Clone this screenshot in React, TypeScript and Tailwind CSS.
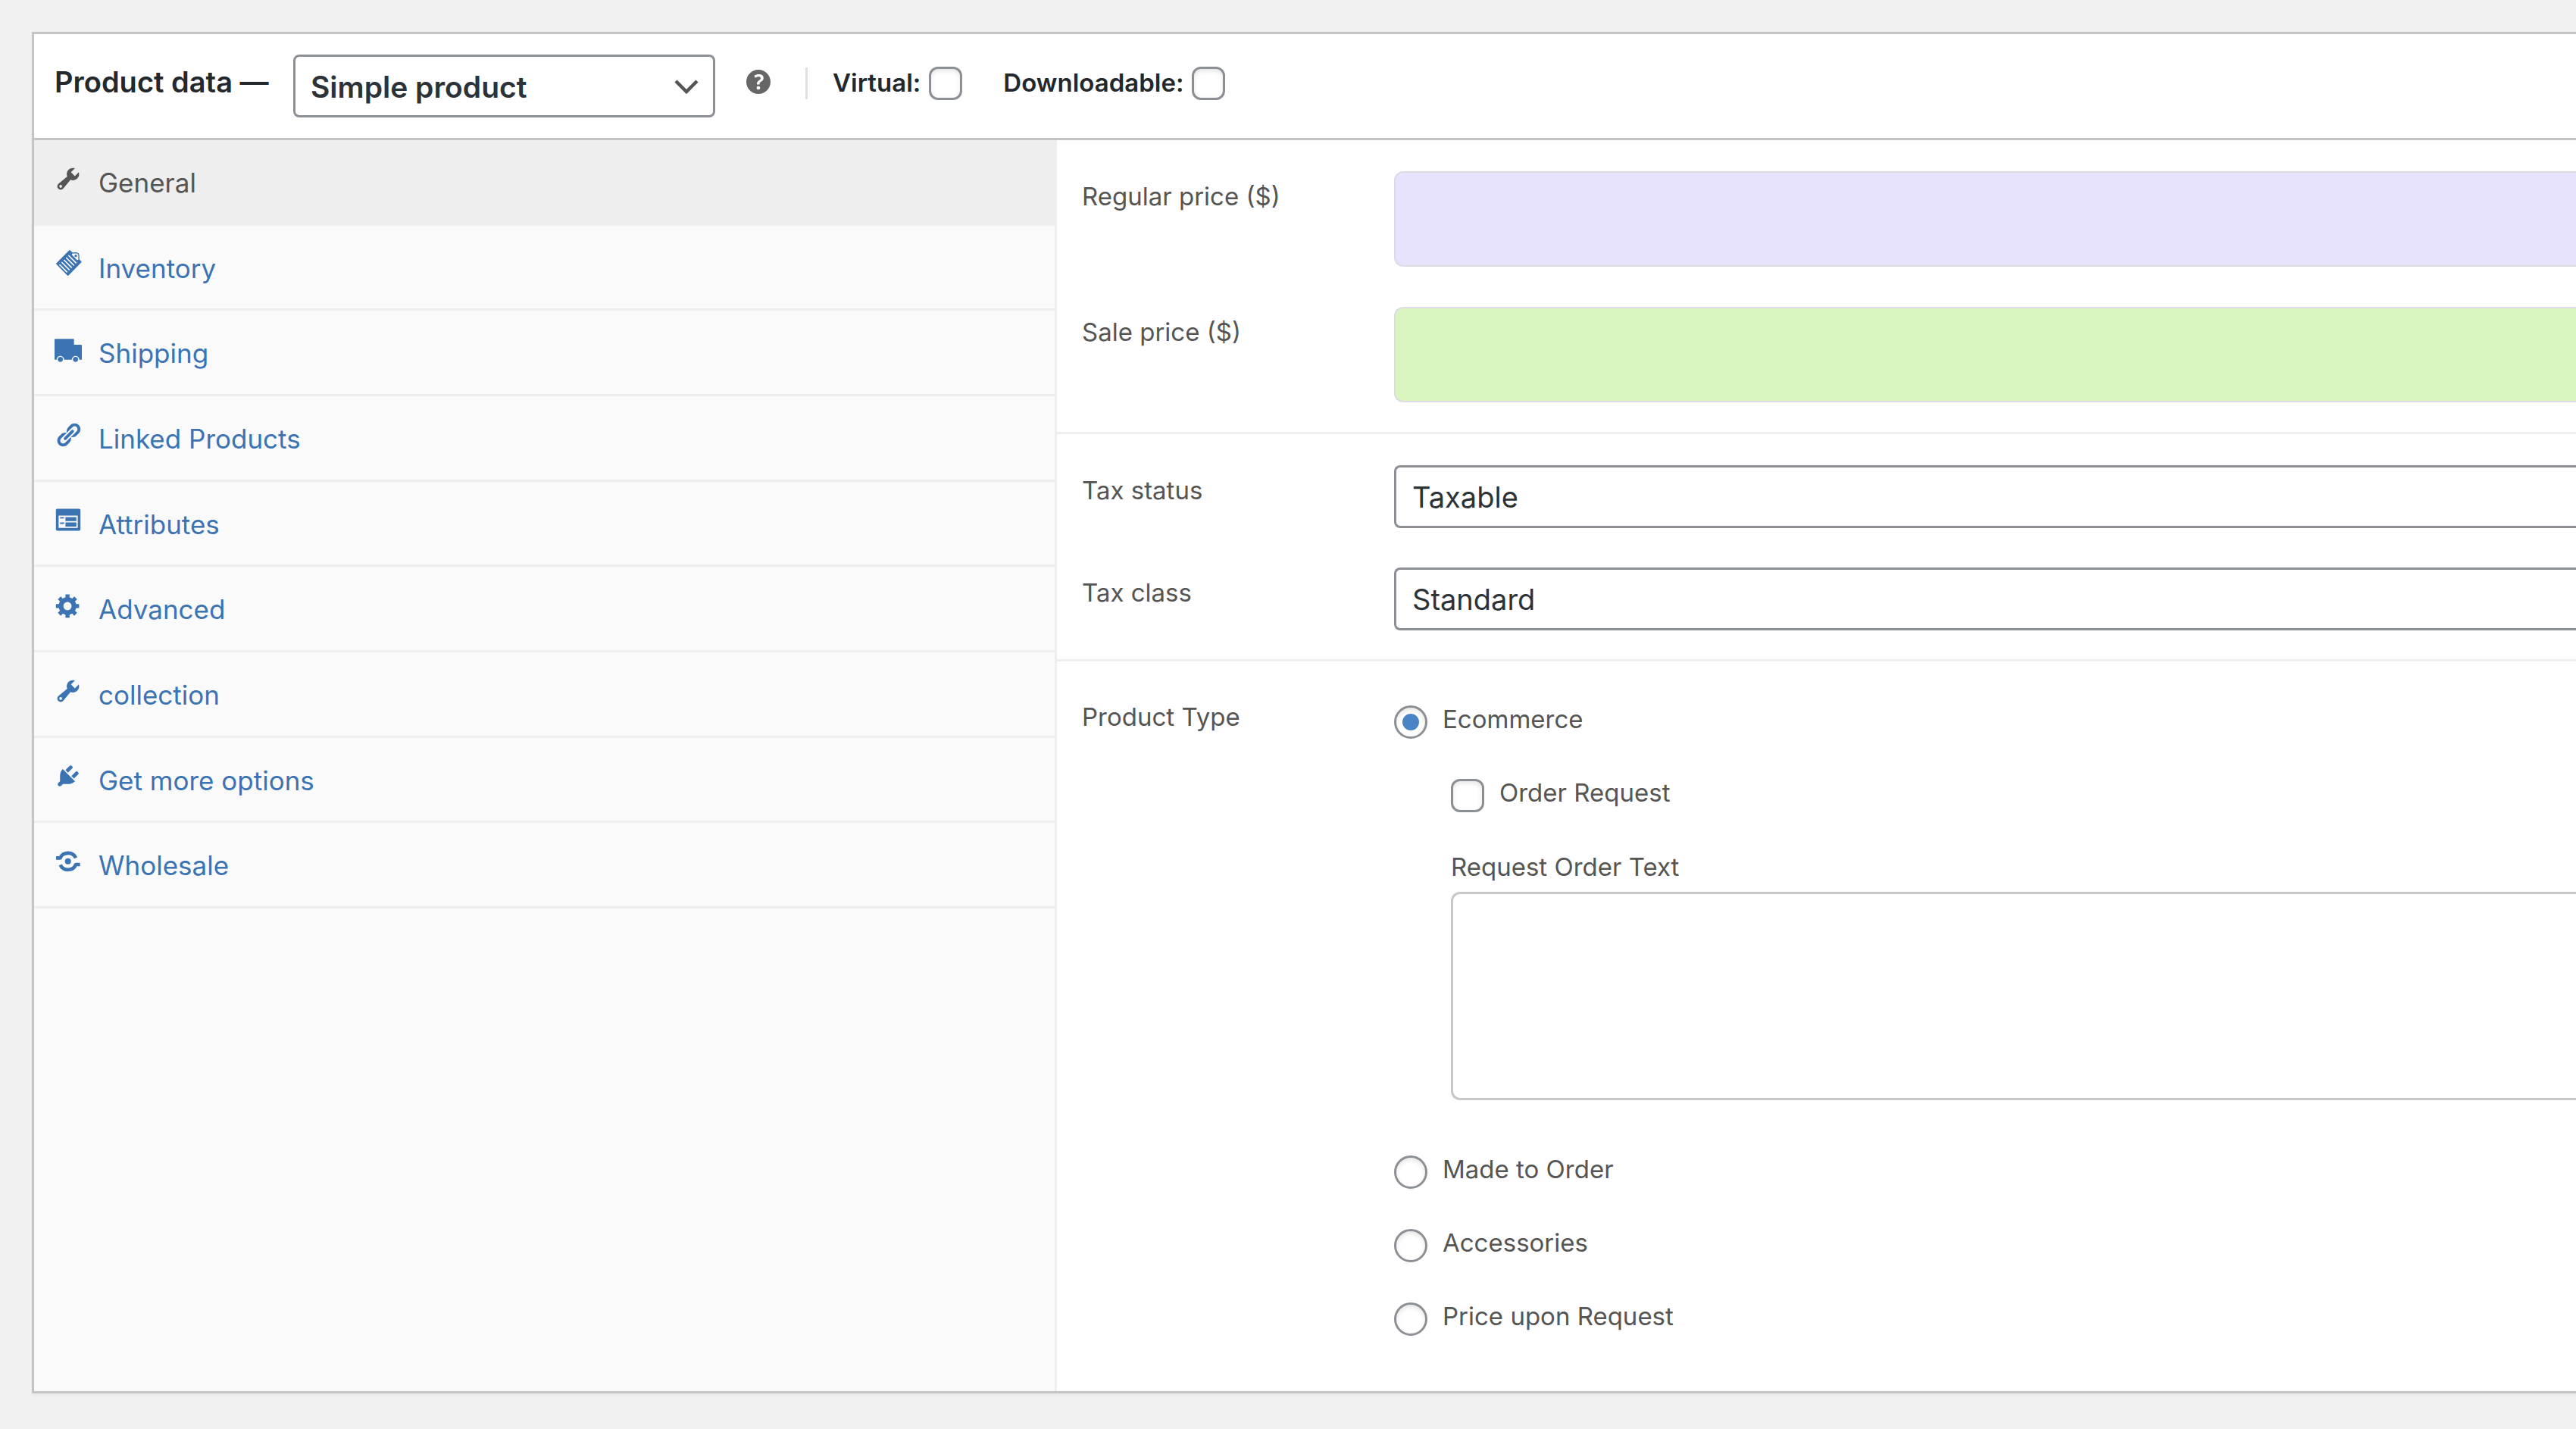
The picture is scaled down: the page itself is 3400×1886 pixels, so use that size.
import { useState, type ReactNode } from "react";

const wrench = (
  <svg viewBox="0 0 20 20" className="size-9" fill="currentColor" aria-hidden="true">
    <path d="M16.68 9.77c-1.34 1.34-3.3 1.67-4.95.99l-5.41 6.52c-.99.99-2.59.99-3.58 0s-.99-2.59 0-3.57l6.52-5.42c-.68-1.65-.35-3.61.99-4.95 1.28-1.28 3.12-1.62 4.72-1.06l-2.89 2.89 2.82 2.82 2.86-2.87c.53 1.58.18 3.39-1.08 4.65zM3.81 16.21c.4.39 1.04.39 1.43 0 .4-.4.4-1.04 0-1.43-.39-.4-1.03-.4-1.43 0-.39.39-.39 1.03 0 1.43z" />
  </svg>
);

const ticket = (
  <svg viewBox="96 391 108 108" className="size-9" fill="none" aria-hidden="true">
    <path
      d="M156 395 L106 445 L149 489 L199 438 Z"
      fill="currentColor"
      stroke="currentColor"
      strokeWidth="7"
      strokeLinejoin="round"
    />
    <path
      d="M163 403 L182 402 Q192 403 192 413 L192 431 L184 433 L163 411 Z"
      fill="#fafafa"
      stroke="currentColor"
      strokeWidth="4"
      strokeLinejoin="round"
    />
    <circle cx="180" cy="414" r="5" fill="currentColor" />
    <path
      d="M115 448 L146 479 M124 439 L155 470 M133 430 L164 461 M142 421 L173 452 M151 412 L182 443"
      stroke="#fafafa"
      strokeWidth="5"
    />
  </svg>
);

const truck = (
  <svg viewBox="96 729 108 108" className="size-9" fill="currentColor" aria-hidden="true">
    <path d="M98 742 H171 Q173 742 173 744 V765 H201 Q204 765 204 768 V824 H194 A15 15 0 0 0 164 824 H134 A15 15 0 0 0 104 824 H96 V744 Q96 742 98 742 Z" />
    <circle cx="119" cy="823" r="10" />
    <circle cx="179" cy="823" r="10" />
  </svg>
);

const chain = (
  <svg viewBox="0 0 20 20" className="size-9" fill="currentColor" aria-hidden="true">
    <path d="M17.74 2.76c1.68 1.69 1.68 4.41 0 6.1l-1.53 1.52c-1.12 1.12-2.7 1.47-4.14 1.09l2.62-2.61.76-.77.76-.76c.84-.84.84-2.2 0-3.04-.84-.85-2.2-.85-3.04 0l-.77.76-3.38 3.38c-.37-1.44-.02-3.02 1.1-4.14l1.52-1.53c1.69-1.68 4.42-1.68 6.1 0zM8.59 13.43l5.34-5.34c.42-.42.42-1.1 0-1.52-.44-.43-1.13-.39-1.53 0l-5.33 5.34c-.42.42-.42 1.1 0 1.52.44.43 1.13.39 1.52 0zm-.76 2.29l4.14-4.15c.38 1.44.03 3.02-1.09 4.14l-1.52 1.53c-1.69 1.68-4.41 1.68-6.1 0-1.68-1.68-1.68-4.42 0-6.1l1.53-1.52c1.12-1.12 2.7-1.47 4.14-1.1l-4.14 4.15c-.85.84-.85 2.2 0 3.05.84.84 2.2.84 3.04 0z" />
  </svg>
);

const form = (
  <svg viewBox="0 0 20 20" className="size-9" fill="currentColor" aria-hidden="true">
    <path d="M2 2h16c.55 0 1 .45 1 1v14c0 .55-.45 1-1 1H2c-.55 0-1-.45-1-1V3c0-.55.45-1 1-1zm15 14V7H3v9h14zM4 8v1h3V8H4zm4 0v3h8V8H8zm-4 4v1h3v-1H4zm4 0v3h8v-3H8z" />
  </svg>
);

const gear = (
  <svg viewBox="0 0 20 20" className="size-9" fill="currentColor" aria-hidden="true">
    <path d="M18 12h-2.18c-.17.7-.44 1.35-.81 1.93l1.54 1.54-2.1 2.1-1.54-1.54c-.58.36-1.23.63-1.91.79V19H8v-2.18c-.68-.16-1.33-.43-1.91-.79l-1.54 1.54-2.12-2.12 1.54-1.54c-.36-.58-.63-1.23-.79-1.91H1V9.03h2.17c.16-.7.44-1.35.8-1.94L2.43 5.55l2.1-2.1 1.54 1.54c.58-.37 1.24-.64 1.93-.81V2h3v2.18c.68.16 1.33.43 1.91.79l1.54-1.54 2.12 2.12-1.54 1.54c.36.59.64 1.24.8 1.94H18V12zm-8.5 1.5c1.66 0 3-1.34 3-3s-1.34-3-3-3-3 1.34-3 3 1.34 3 3 3z" />
  </svg>
);

const plug = (
  <svg viewBox="0 0 20 20" className="size-9" fill="currentColor" aria-hidden="true">
    <path d="M13.11 4.36L9.87 7.6 8 5.73l3.24-3.24c.35-.34 1.05-.2 1.56.32.52.51.66 1.21.31 1.55zm-8 1.77l.91-1.12 9.01 9.01-1.19.84c-.71.71-2.63 1.16-3.82 1.16H6.14L4.9 17.26c-.59.59-1.54.59-2.12 0-.59-.58-.59-1.53 0-2.12l1.24-1.24v-3.88c0-1.13.4-3.19 1.09-3.89zm7.26 3.97l3.24-3.24c.34-.35 1.04-.21 1.55.31.52.51.66 1.21.31 1.55l-3.24 3.25z" />
  </svg>
);

const exchange = (
  <svg viewBox="96 778 108 108" className="size-9" fill="none" stroke="currentColor" aria-hidden="true">
    <path d="M102 818 H119 C127 794 168 790 180 818" strokeWidth="14" strokeLinejoin="round" />
    <path d="M197 844 H180 C172 869 131 873 119 845" strokeWidth="14" strokeLinejoin="round" />
    <circle cx="149" cy="831" r="12" fill="currentColor" stroke="none" />
  </svg>
);

const tabs: { name: string; icon: ReactNode }[] = [
  { name: "General", icon: wrench },
  { name: "Inventory", icon: ticket },
  { name: "Shipping", icon: truck },
  { name: "Linked Products", icon: chain },
  { name: "Attributes", icon: form },
  { name: "Advanced", icon: gear },
  { name: "collection", icon: wrench },
  { name: "Get more options", icon: plug },
  { name: "Wholesale", icon: exchange },
];

const boxShape =
  "size-11 shrink-0 appearance-none rounded-xl border-3 border-[#8c8f94] bg-white shadow-[inset_0_3px_6px_rgba(0,0,0,0.1)] checked:bg-[#3582c4]";
const radioShape =
  "grid size-11 shrink-0 appearance-none place-content-center rounded-full border-3 border-[#8c8f94] bg-white shadow-[inset_0_3px_6px_rgba(0,0,0,0.1)] before:size-[22px] before:rounded-full before:content-[''] checked:before:bg-[#4a84c6]";

function HeaderCheck({ id, label }: { id: string; label: string }) {
  return (
    <label htmlFor={id} className="flex items-center gap-[11px] text-[33px] font-semibold whitespace-nowrap text-[#23282d]">
      {label}
      <input id={id} type="checkbox" className={boxShape} />
    </label>
  );
}

function Field({ id, label, children }: { id: string; label: string; children: ReactNode }) {
  return (
    <div className="flex items-start">
      <label htmlFor={id} className="w-[412px] shrink-0 pt-[9px] text-[33px] leading-12">
        {label}
      </label>
      {children}
    </div>
  );
}

function SelectField({ id, label, options }: { id: string; label: string; options: string[] }) {
  return (
    <Field id={id} label={label}>
      <select
        id={id}
        className="h-[83px] min-w-0 flex-1 appearance-none rounded-l-lg border-3 border-r-0 border-[#8c8f94] bg-white pt-px pl-[21px] text-[38px] text-[#2c3338]"
      >
        {options.map((o) => (
          <option key={o}>{o}</option>
        ))}
      </select>
    </Field>
  );
}

function Radio({ label, value, onPick }: { label: string; value: string; onPick: (v: string) => void }) {
  return (
    <label className="flex h-11 items-center gap-5">
      <input
        type="radio"
        name="product-type"
        className={radioShape}
        checked={value === label}
        onChange={() => onPick(label)}
      />
      <span className="pb-2 leading-9">{label}</span>
    </label>
  );
}

export default function App() {
  const [kind, setKind] = useState("Ecommerce");
  return (
    <div className="min-h-screen overflow-hidden bg-[#f1f1f1] pt-[42px] pb-[46px] pl-[42px] font-['Inter',sans-serif] text-[#555]">
      <section className="border-3 border-r-0 border-[#c4c4c4] bg-white shadow-[0_3px_3px_rgba(0,0,0,0.04)]">
        <header className="flex h-[140px] items-center border-b-3 border-[#c4c4c4] pl-[27px]">
          <label htmlFor="kind" className="w-[315px] shrink-0 pb-[11px] text-[38px] font-semibold whitespace-nowrap text-[#23282d]">
            Product data —
          </label>
          <div className="relative w-[557px] shrink-0">
            <select
              id="kind"
              className="h-[83px] w-full appearance-none rounded-lg border-3 border-[#8c8f94] bg-white pt-[3px] pl-5 text-[39px] font-semibold text-[#2c3338]"
            >
              <option>Simple product</option>
              <option>Grouped product</option>
            </select>
            <svg
              viewBox="0 0 32 20"
              className="pointer-events-none absolute top-8 right-[22px] h-5 w-8"
              fill="none"
              stroke="#555"
              strokeWidth="4.5"
              aria-hidden="true"
            >
              <path d="M2 3 L16 17 L30 3" />
            </svg>
          </div>
          <div className="flex items-center pb-2">
            <button type="button" aria-label="Help" className="ml-[41px] text-[#666]">
              <svg viewBox="3 3 14 14" className="mb-1 size-8" fill="currentColor" aria-hidden="true">
                <path d="M17 10c0-3.87-3.14-7-7-7-3.87 0-7 3.13-7 7s3.13 7 7 7c3.86 0 7-3.13 7-7zm-6.3 1.48H9.14v-.43c0-.38.08-.7.24-.98s.46-.57.88-.89c.41-.29.68-.53.81-.71.14-.18.2-.39.2-.62 0-.25-.09-.44-.28-.58-.19-.13-.45-.19-.79-.19-.58 0-1.25.19-2 .57l-.64-1.28c.87-.49 1.8-.74 2.77-.74.81 0 1.45.2 1.92.58.48.39.71.91.71 1.55 0 .43-.09.8-.29 1.11-.19.32-.57.67-1.11 1.06-.38.28-.61.49-.71.63-.1.15-.15.34-.15.57v.35zm-1.47 2.74c-.18-.17-.27-.42-.27-.73 0-.33.08-.58.26-.75s.43-.25.77-.25c.32 0 .57.09.75.26s.27.42.27.74c0 .3-.09.55-.27.72-.18.18-.43.27-.75.27-.33 0-.58-.09-.76-.26z" />
              </svg>
            </button>
            <div className="mr-[33px] ml-[46px] h-[42px] w-[3px] bg-[#e0e0e0]" />
            <div className="flex gap-[54px]">
              <HeaderCheck id="virtual" label="Virtual:" />
              <HeaderCheck id="downloadable" label="Downloadable:" />
            </div>
          </div>
        </header>

        <div className="flex">
          <nav className="w-[1350px] shrink-0 border-r-3 border-[#eee] bg-[#fafafa]">
            <ul className="grid h-[1014px] auto-rows-fr">
              {tabs.map((t, i) => (
                <li key={t.name} className="border-b-3 border-[#eee]">
                  <a
                    href="#"
                    className={
                      i === 0
                        ? "flex h-full items-center gap-[22px] bg-[#eee] pl-[27px] text-[35px] text-[#555]"
                        : "flex h-full items-center gap-[22px] pl-[27px] text-[35px] text-[#3b73b3]"
                    }
                  >
                    <span className="pb-2">{t.icon}</span>
                    <span className="pt-[3px]">{t.name}</span>
                  </a>
                </li>
              ))}
            </ul>
          </nav>

          <form className="min-w-0 flex-1 text-[33px]">
            <div className="flex flex-col gap-[53px] border-b-3 border-[#eee] pt-[41px] pb-[39px] pl-[33px]">
              <Field id="regular" label="Regular price ($)">
                <input
                  id="regular"
                  type="text"
                  className="h-[126px] min-w-0 flex-1 rounded-l-xl border-2 border-r-0 border-[#dcdce4] bg-[#e7e3fc] px-6 text-[38px]"
                />
              </Field>
              <Field id="sale" label="Sale price ($)">
                <input
                  id="sale"
                  type="text"
                  className="h-[126px] min-w-0 flex-1 rounded-l-xl border-2 border-r-0 border-[#dcdce4] bg-[#d9f4bd] px-6 text-[38px]"
                />
              </Field>
            </div>

            <div className="flex flex-col gap-[52px] border-b-3 border-[#eee] pt-[41px] pb-[38px] pl-[33px]">
              <SelectField id="tax-status" label="Tax status" options={["Taxable", "Shipping only", "None"]} />
              <SelectField id="tax-class" label="Tax class" options={["Standard", "Reduced rate", "Zero rate"]} />
            </div>

            <fieldset className="flex items-start pt-[41px] pb-[73px] pl-[33px]" aria-labelledby="type-label">
              <div id="type-label" className="w-[412px] shrink-0 pt-2 leading-12">
                Product Type
              </div>
              <div className="flex min-w-0 flex-1 flex-col gap-[53px] pt-[17px]">
                <Radio label="Ecommerce" value={kind} onPick={setKind} />
                <div className="mb-5 flex flex-col pl-[75px]">
                  <label className="flex h-11 items-center gap-5">
                    <input type="checkbox" className={boxShape} />
                    <span className="pb-2 leading-9">Order Request</span>
                  </label>
                  <label htmlFor="order-text" className="mt-[48px] leading-12">
                    Request Order Text
                  </label>
                  <textarea
                    id="order-text"
                    className="mt-[9px] block h-[275px] w-full resize-none rounded-l-xl border-3 border-r-0 border-[#c8c8c8] bg-white p-6"
                  />
                </div>
                <Radio label="Made to Order" value={kind} onPick={setKind} />
                <Radio label="Accessories" value={kind} onPick={setKind} />
                <Radio label="Price upon Request" value={kind} onPick={setKind} />
              </div>
            </fieldset>
          </form>
        </div>
      </section>
    </div>
  );
}
